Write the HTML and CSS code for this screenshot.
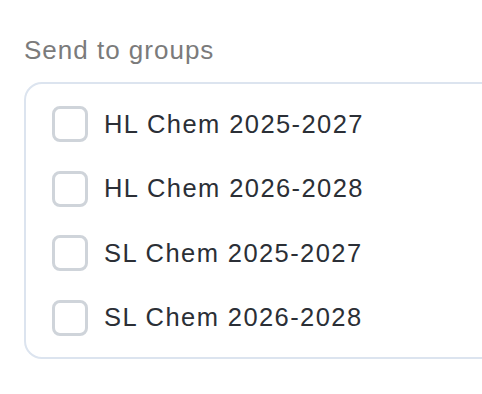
FILE: index.html
```html
<!DOCTYPE html>
<html>
<head>
<meta charset="utf-8">
<link rel="stylesheet" href="styles.css">
</head>
<body>
<div class="page">
  <div class="label">Send to groups</div>
  <div class="group-box">
    <label class="row"><span class="check"></span><span class="name">HL Chem 2025-2027</span></label>
    <label class="row"><span class="check"></span><span class="name">HL Chem 2026-2028</span></label>
    <label class="row"><span class="check"></span><span class="name">SL Chem 2025-2027</span></label>
    <label class="row"><span class="check"></span><span class="name">SL Chem 2026-2028</span></label>
  </div>
</div>
</body>
</html>
```

FILE: styles.css
```css
html, body {
  margin: 0;
  padding: 0;
  background: #ffffff;
}
.page {
  width: 482px;
  height: 394px;
  box-sizing: border-box;
  overflow: hidden;
  padding: 34px 0 0 24px;
  font-family: "Liberation Sans", Arial, sans-serif;
}
.label {
  font-size: 26px;
  line-height: 32px;
  color: #7b7b7b;
  letter-spacing: 1px;
  margin-bottom: 16px;
}
.group-box {
  width: 520px;
  box-sizing: border-box;
  border: 2px solid #dce4ef;
  border-radius: 18px;
  padding: 22px 26px 21px;
  display: flex;
  flex-direction: column;
  gap: 28.5px;
}
.row {
  display: flex;
  align-items: center;
  gap: 16px;
  height: 36px;
}
.check {
  width: 36px;
  height: 36px;
  box-sizing: border-box;
  border: 3px solid #cfd4da;
  border-radius: 8px;
  flex: none;
}
.name {
  font-size: 25.5px;
  color: #2b2f36;
  letter-spacing: 1.42px;
}
```
